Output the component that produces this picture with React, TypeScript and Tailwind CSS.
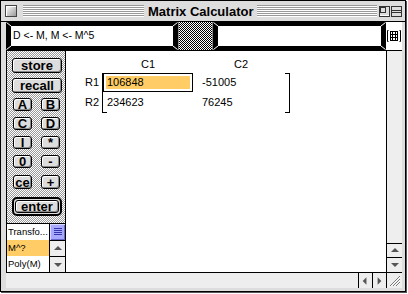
import React from "react";

function Btn({ label, className }: { label: string; className?: string }) {
  return (
    <div
      className={`flex items-center justify-center bg-[#dddddd] border border-black rounded-[3px] shadow-[inset_1px_1px_0_#ffffff,inset_-1px_-1px_0_#888888] font-bold text-black leading-none ${className ?? ""}`}
    >
      {label}
    </div>
  );
}

function Field({ width, text }: { width: number; text?: string }) {
  return (
    <div className="relative h-full bg-black pt-[4px] pb-[4px] pl-[5px] pr-[5px]" style={{ width }}>
      <div className="h-full bg-white flex items-center pl-[2px] text-[10.5px] text-black whitespace-nowrap overflow-hidden">
        {text}
      </div>
      <svg className="absolute inset-0" width={width} height={28}>
        <g stroke="#ffffff" strokeWidth="1">
          <line x1="0.5" y1="0.5" x2="5" y2="4" />
          <line x1={width - 0.5} y1="0.5" x2={width - 5} y2="4" />
          <line x1="0.5" y1="27.5" x2="5" y2="24" />
          <line x1={width - 0.5} y1="27.5" x2={width - 5} y2="24" />
        </g>
      </svg>
    </div>
  );
}

function Arrow({ dir }: { dir: "up" | "down" | "left" | "right" }) {
  const pts = {
    up: "3,8 11,8 7,4",
    down: "3,5 11,5 7,9",
    left: "8,3 8,11 4,7",
    right: "5,3 5,11 9,7",
  }[dir];
  return (
    <svg width="14" height="14" viewBox="0 0 14 14">
      <polygon points={pts} fill="#555555" />
    </svg>
  );
}

export default function App() {
  return (
    <div className="w-[408px] h-[294px] bg-white font-['Liberation_Sans',Arial,sans-serif]">
      <div className="w-[406px] h-[292px] border border-black bg-[#dddddd] flex flex-col shadow-[1px_1px_0_#555555]">
        {/* title bar */}
        <div className="h-[21px] flex items-center pl-[4px] pr-[3px] border-b border-black">
          <div className="w-[12px] h-[12px] border border-[#444444] bg-[linear-gradient(135deg,#ffffff,#999999)] shadow-[inset_1px_1px_0_#ffffff]" />
          <div className="ml-[6px] w-[121px] h-[12px] bg-[repeating-linear-gradient(to_bottom,#999999_0px,#999999_1px,#ffffff_1px,#ffffff_2px)]" />
          <div className="px-[4px] text-[13px] font-bold text-black leading-none whitespace-nowrap">
            Matrix Calculator
          </div>
          <div className="flex-1 h-[12px] bg-[repeating-linear-gradient(to_bottom,#999999_0px,#999999_1px,#ffffff_1px,#ffffff_2px)]" />
          <svg className="ml-[2px]" width="11" height="11" viewBox="0 0 11 11">
            <rect x="0.5" y="0.5" width="10" height="10" fill="#dddddd" stroke="#333333" />
            <rect x="1.5" y="1.5" width="5" height="5" fill="none" stroke="#333333" />
            <line x1="1" y1="9.5" x2="10" y2="9.5" stroke="#ffffff" />
          </svg>
          <svg className="ml-[1px]" width="11" height="11" viewBox="0 0 11 11">
            <rect x="0.5" y="0.5" width="10" height="10" fill="#dddddd" stroke="#333333" />
            <line x1="1" y1="4.5" x2="10" y2="4.5" stroke="#333333" />
            <line x1="1" y1="6.5" x2="10" y2="6.5" stroke="#333333" />
          </svg>
        </div>

        {/* content */}
        <div className="flex-1 flex flex-col ml-[5px] mr-[3px] mb-[3px] bg-white">
          {/* toolbar */}
          <div className="h-[29px] flex border-b border-black">
            <Field width={172} text="D <- M, M <- M^5" />
            <div className="w-[35px] h-full border-x border-[#888888] bg-[conic-gradient(#000000_25%,#ffffff_0_50%,#000000_0_75%,#ffffff_0)] bg-[length:2px_2px]" />
            <Field width={173} />
            <div className="w-[16px] flex items-center justify-center">
              <svg width="14" height="14" viewBox="0 0 14 14">
                <g stroke="#000000" strokeWidth="1" fill="none">
                  <path d="M1.5 1.5 H0.5 V12.5 H1.5" />
                  <path d="M12.5 1.5 H13.5 V12.5 H12.5" />
                  <rect x="3.5" y="2.5" width="7" height="9" />
                  <line x1="3" y1="5.5" x2="11" y2="5.5" />
                  <line x1="3" y1="8.5" x2="11" y2="8.5" />
                  <line x1="5.5" y1="2" x2="5.5" y2="12" />
                  <line x1="8.5" y1="2" x2="8.5" y2="12" />
                </g>
              </svg>
            </div>
          </div>

          {/* main */}
          <div className="flex-1 flex min-h-0">
            {/* left panel */}
            <div className="w-[60px] flex flex-col border-x border-black bg-[conic-gradient(#999999_25%,#ffffff_0_50%,#999999_0_75%,#ffffff_0)] bg-[length:2px_2px]">
              <Btn label="store" className="mt-[7px] ml-[5px] w-[50px] h-[15px] text-[13px]" />
              <Btn label="recall" className="mt-[5px] ml-[5px] w-[50px] h-[15px] text-[13px]" />
              <div className="mt-[5px] ml-[6px] flex gap-[9px]">
                <Btn label="A" className="w-[19px] h-[13px] text-[13px]" />
                <Btn label="B" className="w-[19px] h-[13px] text-[13px]" />
              </div>
              <div className="mt-[6px] ml-[6px] flex gap-[9px]">
                <Btn label="C" className="w-[19px] h-[13px] text-[13px]" />
                <Btn label="D" className="w-[19px] h-[13px] text-[13px]" />
              </div>
              <div className="mt-[6px] ml-[6px] flex gap-[9px]">
                <Btn label="I" className="w-[19px] h-[13px] text-[13px]" />
                <Btn label="*" className="w-[19px] h-[13px] text-[13px]" />
              </div>
              <div className="mt-[6px] ml-[6px] flex gap-[9px]">
                <Btn label="0" className="w-[19px] h-[13px] text-[13px]" />
                <Btn label="-" className="w-[19px] h-[13px] text-[13px]" />
              </div>
              <div className="mt-[7px] ml-[6px] flex gap-[9px]">
                <Btn label="ce" className="w-[19px] h-[14px] text-[13px]" />
                <Btn label="+" className="w-[19px] h-[14px] text-[13px]" />
              </div>
              <div className="mt-[8px] ml-[5px] w-[50px] border-2 border-black rounded-[5px] p-[1px] bg-[#dddddd]">
                <Btn label="enter" className="h-[13px] text-[13px]" />
              </div>

              {/* list */}
              <div className="mt-auto h-[49px] flex border-t border-black bg-white">
                <div className="w-[42px] flex flex-col text-[9.5px] text-black leading-none overflow-hidden whitespace-nowrap">
                  <div className="h-[16px] flex items-center pl-[1px]">Transfo...</div>
                  <div className="h-[16px] flex items-center pl-[1px] bg-[#ffcc66]">M^?</div>
                  <div className="h-[16px] flex items-center pl-[1px]">Poly(M)</div>
                </div>
                <div className="w-[16px] flex flex-col border-l border-black bg-[#eeeeee]">
                  <div className="h-[16px] flex items-center justify-center bg-[#a8a8ff] shadow-[inset_1px_1px_0_#d8d8ff,inset_-1px_-1px_0_#6666cc]">
                    <svg width="10" height="10" viewBox="0 0 10 10">
                      <g stroke="#3333aa">
                        <line x1="1" y1="1.5" x2="9" y2="1.5" />
                        <line x1="1" y1="3.5" x2="9" y2="3.5" />
                        <line x1="1" y1="5.5" x2="9" y2="5.5" />
                        <line x1="1" y1="7.5" x2="9" y2="7.5" />
                      </g>
                    </svg>
                  </div>
                  <div className="h-[16px] flex items-center justify-center border-t border-black">
                    <Arrow dir="up" />
                  </div>
                  <div className="flex-1 flex items-center justify-center border-t border-black">
                    <Arrow dir="down" />
                  </div>
                </div>
              </div>
            </div>

            {/* matrix area */}
            <div className="flex-1 bg-white pl-[19px] pt-[6px] text-[11px] text-black leading-none">
              <div className="flex h-[14px] items-center">
                <div className="w-[18px]" />
                <div className="w-[90px] text-center">C1</div>
                <div className="w-[4px]" />
                <div className="w-[88px] text-center">C2</div>
              </div>
              <div className="flex mt-[2px]">
                <div className="w-[17px] flex flex-col">
                  <div className="h-[19px] flex items-center">R1</div>
                  <div className="h-[21px] flex items-center">R2</div>
                </div>
                <div className="w-[5px] border-l border-y border-black" />
                <div className="-ml-[4px] flex flex-col">
                  <div className="h-[19px] flex">
                    <div className="w-[90px] border border-black p-[2px]">
                      <div className="h-full bg-[#ffcc66] flex items-center pl-[1px]">106848</div>
                    </div>
                    <div className="w-[4px]" />
                    <div className="w-[88px] flex items-center pl-[5px]">-51005</div>
                  </div>
                  <div className="h-[21px] flex">
                    <div className="w-[90px] flex items-center pl-[4px]">234623</div>
                    <div className="w-[4px]" />
                    <div className="w-[88px] flex items-center pl-[5px]">76245</div>
                  </div>
                </div>
                <div className="w-[5px] border-r border-y border-black" />
              </div>
            </div>

            {/* vertical scrollbar */}
            <div className="w-[16px] flex flex-col border-l border-black bg-[#eeeeee]">
              <div className="flex-1" />
              <div className="h-[14px] flex items-center justify-center border-t border-black">
                <Arrow dir="up" />
              </div>
              <div className="h-[15px] flex items-center justify-center border-t border-black">
                <Arrow dir="down" />
              </div>
            </div>
          </div>

          {/* horizontal scrollbar */}
          <div className="h-[16px] flex border-t border-black bg-[#eeeeee]">
            <div className="flex-1" />
            <div className="w-[14px] flex items-center justify-center border-l border-black">
              <Arrow dir="left" />
            </div>
            <div className="w-[14px] flex items-center justify-center border-l border-black">
              <Arrow dir="right" />
            </div>
            <div className="w-[16px] flex items-center justify-center border-l border-black">
              <svg width="14" height="14" viewBox="0 0 14 14">
                <g stroke="#777777">
                  <line x1="2" y1="12" x2="12" y2="2" />
                  <line x1="5" y1="12" x2="12" y2="5" />
                  <line x1="8" y1="12" x2="12" y2="8" />
                </g>
                <g stroke="#ffffff">
                  <line x1="3" y1="12" x2="12" y2="3" />
                  <line x1="6" y1="12" x2="12" y2="6" />
                  <line x1="9" y1="12" x2="12" y2="9" />
                </g>
              </svg>
            </div>
          </div>
        </div>
      </div>
    </div>
  );
}
